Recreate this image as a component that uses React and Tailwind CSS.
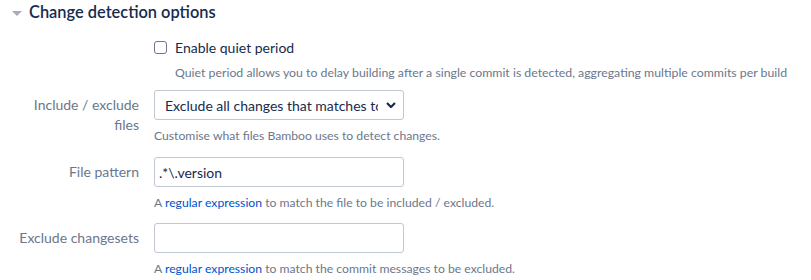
const font = { fontFamily: 'Lato, "Open Sans", sans-serif' };

const Chevron = () => (
  <svg width="10" height="6" viewBox="0 0 10 6" className="shrink-0">
    <path d="M1 1 L5 5 L9 1" fill="none" stroke="#172b4d" strokeWidth="2.2" />
  </svg>
);

const Link = ({ children }) => <a href="#" className="text-[#0052cc]">{children}</a>;

const Row = ({ label, children, helper, className = "" }) => (
  <div className={`flex ${className}`}>
    <div className="w-[139px] shrink-0 pt-[5px] text-right text-[14px] leading-5 text-[#6b778c]">{label}</div>
    <div className="ml-[15px] flex flex-col">
      {children}
      <p className="mt-2 text-[12.2px] leading-4 text-[#6b778c]">{helper}</p>
    </div>
  </div>
);

const App = () => {
  return (
    <div className="h-[280px] w-[811px] bg-white" style={font}>
      <div className="flex items-center pl-[12px] h-[26px]">
        <span className="h-0 w-0 border-x-[5px] border-t-[5px] border-x-transparent border-t-[#a5adba]" />
        <h2 className="ml-[7px] -mt-[3px] text-[16.4px] font-semibold leading-6 text-[#172b4d]">Change detection options</h2>
      </div>

      <div className="ml-[154px] mt-[11px]">
        <label className="flex items-center h-5">
          <span className="h-[13px] w-[13px] rounded-[3px] border border-[#6b778c] bg-white" />
          <span className="ml-[8px] text-[14px] text-[#172b4d]">Enable quiet period</span>
        </label>
        <p className="ml-[21px] mt-[8px] text-[12.3px] leading-4 text-[#6b778c] whitespace-nowrap">
          Quiet period allows you to delay building after a single commit is detected, aggregating multiple commits per build
        </p>
      </div>

      <Row
        className="mt-[9px]"
        label={<>Include / exclude<br />files</>}
        helper="Customise what files Bamboo uses to detect changes."
      >
        <div className="flex h-[30px] w-[250px] items-center rounded-[3px] border border-[#c1c7d0] bg-white pl-[10px] pr-[7px]">
          <span className="flex-1 overflow-hidden whitespace-nowrap text-[14px] text-[#172b4d]">Exclude all changes that matches to</span>
          <span className="ml-2"><Chevron /></span>
        </div>
      </Row>

      <Row
        className="mt-[13px]"
        label="File pattern"
        helper={<>A <Link>regular expression</Link> to match the file to be included / excluded.</>}
      >
        <div className="flex h-[30px] w-[250px] items-center rounded-[3px] border border-[#c1c7d0] bg-white pl-[4px]">
          <span className="text-[14px] text-[#172b4d]">.*\.version</span>
        </div>
      </Row>

      <Row
        className="mt-[12px]"
        label="Exclude changesets"
        helper={<>A <Link>regular expression</Link> to match the commit messages to be excluded.</>}
      >
        <div className="h-[30px] w-[250px] rounded-[3px] border border-[#c1c7d0] bg-white" />
      </Row>
    </div>
  );
};

export default App;
